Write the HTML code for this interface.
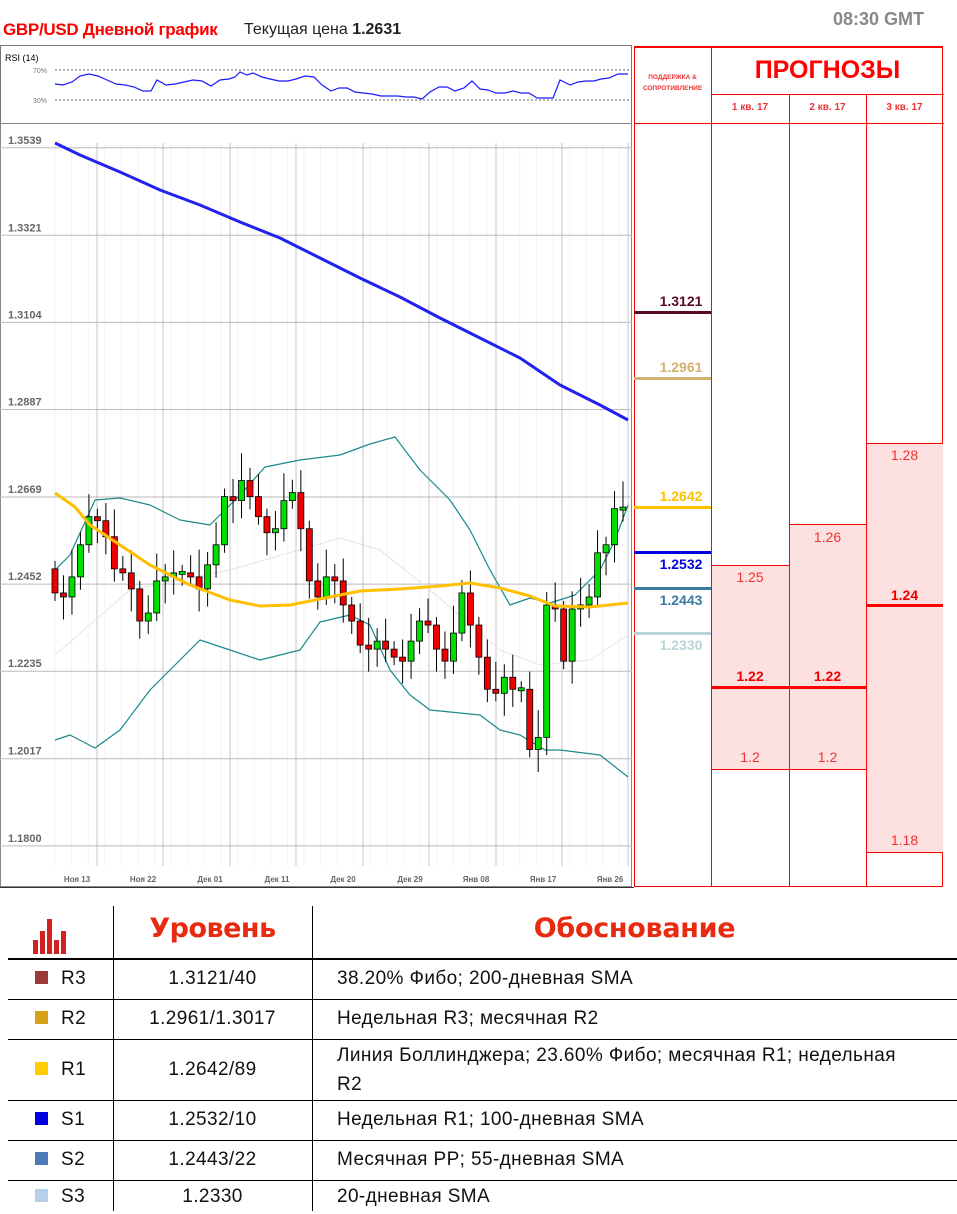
<!DOCTYPE html>
<html><head><meta charset="utf-8">
<style>
body{margin:0;width:957px;height:1211px;background:#fff;font-family:"Liberation Sans",sans-serif;position:relative;overflow:hidden}
.a{position:absolute}
table{border-collapse:collapse}
</style></head><body>
<div class="a" style="left:3px;top:20px;font-size:17px;font-weight:bold;color:#f00;letter-spacing:-0.3px">GBP/USD Дневной график</div>
<div class="a" style="left:244px;top:21px;font-size:16px;color:#222">Текущая цена <b>1.2631</b></div>
<div class="a" style="left:833px;top:9px;font-size:18px;font-weight:bold;color:#888">08:30 GMT</div>

<svg class="a" style="left:0;top:0" width="957" height="900" id="s">
<rect x="0.5" y="45.5" width="631" height="78" fill="#fff" stroke="#777"/>
<text x="5" y="61" font-size="9" fill="#000">RSI (14)</text>
<text x="33" y="73" font-size="7" fill="#777">70%</text>
<text x="33" y="103" font-size="7" fill="#777">30%</text>
<line x1="55" y1="70" x2="630" y2="70" stroke="#666" stroke-dasharray="2,2"/>
<line x1="55" y1="100" x2="630" y2="100" stroke="#666" stroke-dasharray="2,2"/>
<polyline fill="none" stroke="#1a1aff" stroke-width="1.2" points="55,84 63,85 72,82 80,76 89,74 98,76 107,80 116,84 125,85 134,87 143,91 151,91 157,80 166,85 175,84 184,82 193,80 202,81 211,86 220,80 229,79 235,77 240,72 247,75 253,73 262,77 270,79 279,81 288,81 296,79 305,76 314,77 322,85 331,91 339,88 347,88 355,92 363,93 372,94 381,96 389,96 398,96 406,97 414,97 422,99 430,92 439,87 447,87 455,91 464,88 472,81 480,89 488,90 496,93 505,93 513,91 521,93 529,93 537,98 545,98 553,98 560,80 570,85 578,82 586,81 594,81 601,79 609,78 618,74 628,74"/>
<g id="grid"></g>
<g id="chart"></g>
</svg>

<div class="a" style="left:634px;top:46px;width:309px;height:841px;border:1px solid #f00;border-top:2px solid #f00;box-sizing:border-box"></div>
<div class="a" style="left:711px;top:46px;width:1px;height:841px;background:#f00"></div>
<div class="a" style="left:789px;top:94px;width:1px;height:793px;background:#f00"></div>
<div class="a" style="left:866px;top:94px;width:1px;height:793px;background:#f00"></div>
<div class="a" style="left:711px;top:94px;width:233px;height:1px;background:#f00"></div>
<div class="a" style="left:634px;top:123px;width:310px;height:1px;background:#f00"></div>
<div class="a" style="left:634px;top:72px;width:77px;text-align:center;font-size:6.5px;font-weight:bold;color:#e33;line-height:11px">ПОДДЕРЖКА &amp;<br>СОПРОТИВЛЕНИЕ</div>
<div class="a" style="left:711px;top:56px;width:233px;text-align:center;font-size:25px;font-weight:bold;color:#f00">ПРОГНОЗЫ</div>
<div class="a" style="left:711px;top:102px;width:78px;text-align:center;font-size:10px;font-weight:bold;color:#e33">1 кв. 17</div>
<div class="a" style="left:789px;top:102px;width:77px;text-align:center;font-size:10px;font-weight:bold;color:#e33">2 кв. 17</div>
<div class="a" style="left:866px;top:102px;width:77px;text-align:center;font-size:10px;font-weight:bold;color:#e33">3 кв. 17</div>

<div class="a" style="left:634px;top:311px;width:77px;height:3px;background:#5a0a20"></div>
<div class="a" style="left:634px;top:293px;width:94px;text-align:center;font-size:14px;font-weight:bold;color:#5a0a20">1.3121</div>
<div class="a" style="left:634px;top:377px;width:77px;height:3px;background:#d4b070"></div>
<div class="a" style="left:634px;top:359px;width:94px;text-align:center;font-size:14px;font-weight:bold;color:#d4b070">1.2961</div>
<div class="a" style="left:634px;top:506px;width:77px;height:3px;background:#ffc000"></div>
<div class="a" style="left:634px;top:488px;width:94px;text-align:center;font-size:14px;font-weight:bold;color:#ffc000">1.2642</div>
<div class="a" style="left:634px;top:551px;width:77px;height:3px;background:#0000e0"></div>
<div class="a" style="left:634px;top:556px;width:94px;text-align:center;font-size:14px;font-weight:bold;color:#0000e0">1.2532</div>
<div class="a" style="left:634px;top:587px;width:77px;height:3px;background:#3a7aa0"></div>
<div class="a" style="left:634px;top:592px;width:94px;text-align:center;font-size:14px;font-weight:bold;color:#3a7aa0">1.2443</div>
<div class="a" style="left:634px;top:632px;width:77px;height:3px;background:#b8d4d8"></div>
<div class="a" style="left:634px;top:637px;width:94px;text-align:center;font-size:14px;font-weight:bold;color:#b8d4d8">1.2330</div>

<div class="a" style="left:712px;top:565px;width:77px;height:203px;background:#fde0e0;border-top:1px solid #f00;border-bottom:1px solid #f00"></div>
<div class="a" style="left:790px;top:524px;width:76px;height:244px;background:#fde0e0;border-top:1px solid #f00;border-bottom:1px solid #f00"></div>
<div class="a" style="left:867px;top:443px;width:76px;height:408px;background:#fde0e0;border-top:1px solid #f00;border-bottom:1px solid #f00"></div>
<div class="a" style="left:712px;top:686px;width:154px;height:3px;background:#f00"></div>
<div class="a" style="left:867px;top:604px;width:76px;height:3px;background:#f00"></div>
<div class="a" style="left:711px;top:569px;width:78px;text-align:center;font-size:14px;color:#e33">1.25</div>
<div class="a" style="left:789px;top:529px;width:77px;text-align:center;font-size:14px;color:#e33">1.26</div>
<div class="a" style="left:866px;top:447px;width:77px;text-align:center;font-size:14px;color:#e33">1.28</div>
<div class="a" style="left:711px;top:668px;width:78px;text-align:center;font-size:14px;font-weight:bold;color:#e00">1.22</div>
<div class="a" style="left:789px;top:668px;width:77px;text-align:center;font-size:14px;font-weight:bold;color:#e00">1.22</div>
<div class="a" style="left:866px;top:587px;width:77px;text-align:center;font-size:14px;font-weight:bold;color:#e00">1.24</div>
<div class="a" style="left:711px;top:749px;width:78px;text-align:center;font-size:14px;color:#e33">1.2</div>
<div class="a" style="left:789px;top:749px;width:77px;text-align:center;font-size:14px;color:#e33">1.2</div>
<div class="a" style="left:866px;top:832px;width:77px;text-align:center;font-size:14px;color:#e33">1.18</div>

<div class="a" style="left:0;top:887px;width:634px;height:1px;background:#333"></div>
<div class="a" style="left:33px;top:916px">
<svg width="36" height="38"><g fill="#d42020"><rect x="0" y="24" width="5" height="14"/><rect x="7" y="15" width="5" height="23"/><rect x="14" y="3" width="5" height="35"/><rect x="21" y="24" width="5" height="14"/><rect x="28" y="15" width="5" height="23"/></g></svg></div>
<div class="a" style="left:113px;top:906px;width:1px;height:305px;background:#000"></div>
<div class="a" style="left:312px;top:906px;width:1px;height:305px;background:#000"></div>
<div class="a" style="left:113px;top:913px;width:199px;text-align:center;font-size:27px;font-weight:900;color:#e82a10;font-family:'DejaVu Sans',sans-serif;letter-spacing:-0.5px">Уровень</div>
<div class="a" style="left:312px;top:913px;width:645px;text-align:center;font-size:27px;font-weight:900;color:#e82a10;font-family:'DejaVu Sans',sans-serif;letter-spacing:-0.3px">Обоснование</div>
<div class="a" style="left:8px;top:958px;width:949px">
<table style="width:949px;font-size:19px;letter-spacing:0.4px;color:#111">
<colgroup><col style="width:105px"><col style="width:199px"><col></colgroup>
<tr style="height:40px;border-top:2px solid #000;border-bottom:1px solid #000"><td style="padding-left:27px"><span style="display:inline-block;width:13px;height:13px;background:#9b3a3a;margin-right:13px"></span>R3</td><td style="text-align:center">1.3121/40</td><td style="padding-left:25px">38.20% Фибо; 200-дневная SMA</td></tr>
<tr style="height:40px;border-bottom:1px solid #000"><td style="padding-left:27px"><span style="display:inline-block;width:13px;height:13px;background:#d4a017;margin-right:13px"></span>R2</td><td style="text-align:center">1.2961/1.3017</td><td style="padding-left:25px">Недельная R3; месячная R2</td></tr>
<tr style="height:60px;border-bottom:1px solid #000"><td style="padding-left:27px"><span style="display:inline-block;width:13px;height:13px;background:#ffcc00;margin-right:13px"></span>R1</td><td style="text-align:center">1.2642/89</td><td style="padding-left:25px;line-height:29px">Линия Боллинджера; 23.60% Фибо; месячная R1; недельная<br>R2</td></tr>
<tr style="height:40px;border-bottom:1px solid #000"><td style="padding-left:27px"><span style="display:inline-block;width:13px;height:13px;background:#0000e0;margin-right:13px"></span>S1</td><td style="text-align:center">1.2532/10</td><td style="padding-left:25px">Недельная R1; 100-дневная SMA</td></tr>
<tr style="height:40px;border-bottom:1px solid #000"><td style="padding-left:27px"><span style="display:inline-block;width:13px;height:13px;background:#4a7ab8;margin-right:13px"></span>S2</td><td style="text-align:center">1.2443/22</td><td style="padding-left:25px">Месячная PP; 55-дневная SMA</td></tr>
<tr style="height:34px"><td style="padding-left:27px"><span style="display:inline-block;width:13px;height:13px;background:#b8cfe8;margin-right:13px"></span>S3</td><td style="text-align:center">1.2330</td><td style="padding-left:25px">20-дневная SMA</td></tr>
</table></div>

<script>
var NS="http://www.w3.org/2000/svg";
function el(p,t,a){var e=document.createElementNS(NS,t);for(var k in a)e.setAttribute(k,a[k]);p.appendChild(e);return e;}
var g=document.getElementById('grid'),c=document.getElementById('chart');
function Y(p){return 497+(1.2669-p)*4014;}
el(g,'rect',{x:0.5,y:123.5,width:631,height:763,fill:'#fff',stroke:'#888'});
for(var x=55;x<630;x+=16.6)el(g,'line',{x1:x,y1:143,x2:x,y2:866,stroke:'#f3f3f3'});
var vx=[97,163,230,296,363,429,496,562,628];
vx.forEach(function(x){el(g,'line',{x1:x,y1:143,x2:x,y2:866,stroke:'#c4c4c4'});});
var labs=["1.3539","1.3321","1.3104","1.2887","1.2669","1.2452","1.2235","1.2017","1.1800"];
labs.forEach(function(l,i){var y=Y(+l);el(g,'line',{x1:0,y1:y,x2:632,y2:y,stroke:'#bbb'});var t=el(g,'text',{x:8,y:y-4,'font-size':11,fill:'#666','font-weight':'bold'});t.textContent=l;});
var dl=["Ноя 13","Ноя 22","Дек 01","Дек 11","Дек 20","Дек 29","Янв 08","Янв 17","Янв 26"];
[77,143,210,277,343,410,476,543,610].forEach(function(x,i){var t=el(g,'text',{x:x,y:882,'font-size':8,fill:'#666','text-anchor':'middle','font-weight':'bold'});t.textContent=dl[i];});
function pl(pts,col,w){el(c,'polyline',{points:pts,fill:'none',stroke:col,'stroke-width':w,'stroke-linejoin':'round'});}
pl("55,655 130,590 230,570 340,538 380,550 430,590 500,650 540,665 590,660 628,635","#e4e4e4",1);
pl("55,570 70,555 95,500 120,498 150,505 180,520 210,525 240,495 265,467 300,460 340,455 370,444 395,437 420,470 450,500 470,530 490,570 510,605 530,598 550,603 575,595 600,570 615,540 628,505","#1a8a8a",1.2);
pl("55,740 70,735 95,748 120,730 150,690 180,660 200,640 230,650 260,660 300,650 320,622 350,615 370,625 390,670 410,695 430,710 460,713 480,715 500,730 520,735 545,750 560,750 600,755 628,777","#1a8a8a",1.2);
var closes=[1.243,1.242,1.247,1.255,1.262,1.261,1.257,1.249,1.248,1.244,1.236,1.238,1.246,1.247,1.248,1.248,1.247,1.244,1.250,1.255,1.267,1.266,1.271,1.267,1.262,1.258,1.259,1.266,1.268,1.259,1.246,1.242,1.247,1.246,1.240,1.236,1.230,1.229,1.231,1.229,1.227,1.226,1.231,1.236,1.235,1.229,1.226,1.233,1.243,1.235,1.227,1.219,1.218,1.222,1.219,1.219,1.204,1.207,1.240,1.239,1.226,1.239,1.240,1.242,1.253,1.255,1.264,1.264];
var n=closes.length,sp=(623-55)/(n-1),o=1.249;
for(var i=0;i<n;i++){var x=55+i*sp,cl=closes[i];var hi=Math.max(o,cl)+0.002+((i*7)%5)*0.0012,lo=Math.min(o,cl)-0.002-((i*3)%4)*0.0012;
el(c,'line',{x1:x,y1:Y(hi),x2:x,y2:Y(lo),stroke:'#000'});
var t=Y(Math.max(o,cl)),b=Y(Math.min(o,cl));if(b-t<3){t-=1.5;b+=1.5;}
el(c,'rect',{x:x-3,y:t,width:6,height:b-t,fill:cl>=o?'#00dd00':'#ee0000',stroke:'#000','stroke-width':0.8});o=cl;}
pl("55,143 80,155 120,172 160,190 200,205 240,222 280,238 320,258 360,278 400,297 440,318 480,338 520,358 560,385 600,405 628,420","#2222ee",3);
pl("55,493 75,507 90,525 120,545 150,565 190,585 230,600 260,606 290,605 330,597 360,591 400,589 440,586 470,583 500,588 530,596 555,606 590,607 628,603","#ffc000",3);
</script>
</body></html>
